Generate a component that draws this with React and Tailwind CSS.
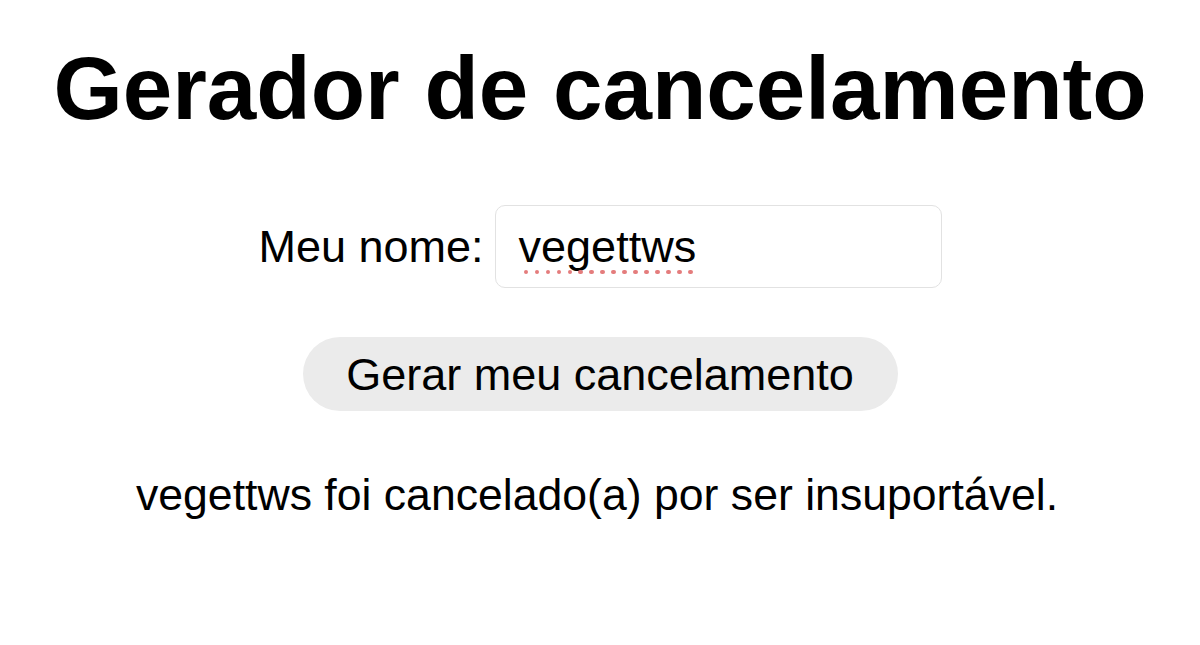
export default function App() {
  const name = "vegettws";
  const dots = Array.from({ length: 16 });

  return (
    <div className="min-h-[645px] w-full bg-white text-black font-['Liberation_Sans',Arial,sans-serif] flex flex-col items-center">
      <h1 className="mt-[34px] text-[89px] leading-[108px] font-bold tracking-normal">Gerador de cancelamento</h1>

      <div className="mt-[63px] flex items-center gap-[11px]">
        <label className="text-[45px] leading-none">Meu nome:</label>
        <div className="w-[447px] h-[83px] rounded-[10px] border border-[#e2e2e2] pl-[23px] flex items-center">
          <span className="relative text-[45px] leading-none">
            {name}
            {/* spellcheck squiggle */}
            <span className="absolute left-[5px] top-[100%] mt-[1px] flex gap-[6.6px]">
              {dots.map((_, i) => (
                <span key={i} className="w-[4.4px] h-[4.4px] rounded-full bg-[#e47c7c]" />
              ))}
            </span>
          </span>
        </div>
      </div>

      <button className="mt-[49px] w-[595px] h-[74px] rounded-full bg-[#ebebeb] text-[45px] leading-none text-black">
        Gerar meu cancelamento
      </button>

      <p className="mt-[62px] text-[44.6px] leading-none pr-[6px]">
        {name} foi cancelado(a) por ser insuportável.
      </p>
    </div>
  );
}
